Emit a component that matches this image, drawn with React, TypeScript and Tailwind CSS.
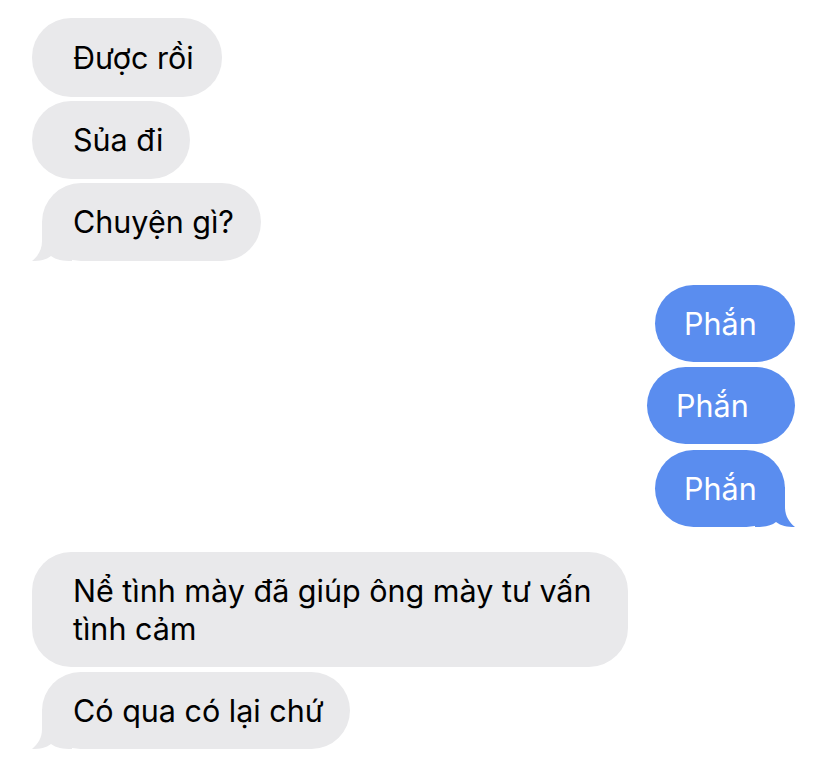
import React from 'react';

type Side = 'in' | 'out';

interface Message {
  text: string;
  side: Side;
  tail?: boolean;
  box: string;
}

const messages: Message[] = [
  { text: 'Được rồi', side: 'in', box: 'mt-[18px] w-[190px] h-[79px] pl-[41px]' },
  { text: 'Sủa đi', side: 'in', box: 'mt-[4px] w-[158px] h-[78px] pl-[41px]' },
  { text: 'Chuyện gì?', side: 'in', tail: true, box: 'mt-[4px] ml-[10px] w-[219px] h-[78px] pl-[31px]' },
  { text: 'Phắn', side: 'out', box: 'mt-[24px] w-[140px] h-[77px] pl-[29px]' },
  { text: 'Phắn', side: 'out', box: 'mt-[5px] w-[148px] h-[77px] pl-[29px]' },
  { text: 'Phắn', side: 'out', tail: true, box: 'mt-[6px] mr-[10px] w-[130px] h-[77px] pl-[29px]' },
  {
    text: 'Nể tình mày đã giúp ông mày tư vấn tình cảm',
    side: 'in',
    box: 'mt-[25px] w-[596px] h-[115px] pl-[41px] pr-[30px]',
  },
  { text: 'Có qua có lại chứ', side: 'in', tail: true, box: 'mt-[5px] ml-[10px] w-[308px] h-[77px] pl-[31px]' },
];

const Tail: React.FC<{ side: Side }> = ({ side }) => (
  <svg
    width="40"
    height="40"
    viewBox="0 0 40 40"
    className={
      side === 'in'
        ? 'absolute bottom-0 left-[-10px] fill-[#e9e9eb]'
        : 'absolute bottom-0 right-[-10px] fill-[#5a8def] -scale-x-100'
    }
  >
    <path d="M10,0 L10,20 C10,29 6,35 0,40 C8,40 14,39 19,35 C24,39 31,40 40,40 L40,0 Z" />
  </svg>
);

const Bubble: React.FC<{ msg: Message }> = ({ msg }) => {
  const tone =
    msg.side === 'in' ? 'bg-[#e9e9eb] text-black self-start' : 'bg-[#5a8def] text-white self-end';
  return (
    <div className={`relative flex items-center rounded-[39px] ${tone} ${msg.box}`}>
      {msg.tail && <Tail side={msg.side} />}
      <span className="relative text-[30.5px] leading-[38px]">{msg.text}</span>
    </div>
  );
};

export default function App() {
  return (
    <div
      className="flex min-h-[769px] w-[828px] flex-col bg-white pl-[32px] pr-[33px]"
      style={{ fontFamily: 'Inter, "Noto Sans", sans-serif' }}
    >
      {messages.map((msg, i) => (
        <Bubble key={i} msg={msg} />
      ))}
    </div>
  );
}
